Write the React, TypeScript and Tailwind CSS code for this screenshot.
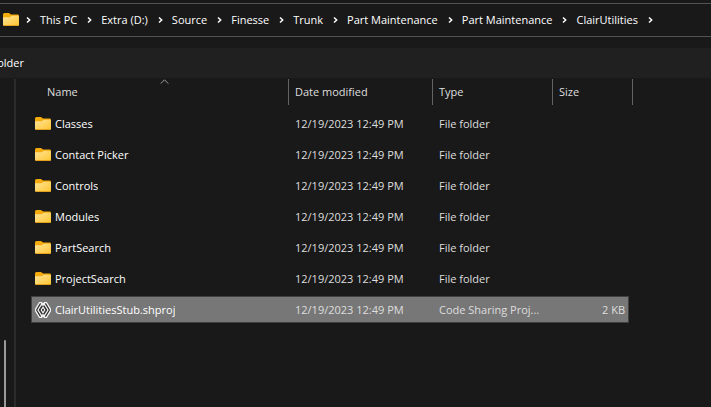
import React from "react";

const crumbs = [
  "This PC",
  "Extra (D:)",
  "Source",
  "Finesse",
  "Trunk",
  "Part Maintenance",
  "Part Maintenance",
  "ClairUtilities",
];

type Entry = { name: string; modified: string; type: string; size?: string; selected?: boolean };

const modified = "12/19/2023 12:49 PM";

const entries: Entry[] = [
  { name: "Classes", modified, type: "File folder" },
  { name: "Contact Picker", modified, type: "File folder" },
  { name: "Controls", modified, type: "File folder" },
  { name: "Modules", modified, type: "File folder" },
  { name: "PartSearch", modified, type: "File folder" },
  { name: "ProjectSearch", modified, type: "File folder" },
  { name: "ClairUtilitiesStub.shproj", modified, type: "Code Sharing Proj...", size: "2 KB", selected: true },
];

function FolderIcon() {
  return (
    <svg width="16" height="16" viewBox="0 0 16 16" className="shrink-0" aria-hidden="true">
      <defs>
        <linearGradient id="folderFront" x1="0" y1="0" x2="1" y2="1">
          <stop offset="0" stopColor="#ffe49a" />
          <stop offset="1" stopColor="#fec52f" />
        </linearGradient>
      </defs>
      <path d="M0 2.5Q0 1 1.5 1H5.5Q6.3 1 6.8 1.6L8 2.6H14.5Q16 2.6 16 4V8H0Z" fill="#f5ab0c" />
      <path d="M0 5.2H6.2Q7 5.2 7.5 4.7L8.2 4Q8.6 3.7 9.2 3.7H14.8Q16 3.7 16 4.9V12.5Q16 14 14.5 14H1.5Q0 14 0 12.5Z" fill="url(#folderFront)" />
      <path d="M0.3 13Q0.8 14 1.8 14H14.2Q15.3 14 15.8 13Z" fill="#e5a01c" />
    </svg>
  );
}

function SharedProjectIcon() {
  return (
    <svg width="16" height="16" viewBox="0 0 16 16" className="shrink-0" aria-hidden="true" strokeLinejoin="round">
      <path d="M4.2 0H6.8L8 1.2L9.2 0H11.8L16 6.8V9.2L11.8 16H9.2L8 14.8L6.8 16H4.2L0 9.2V6.8Z" fill="#f4f4f4" />
      <path d="M5.6 1.4L1.6 8L5.6 14.6M10.4 1.4L14.4 8L10.4 14.6" fill="none" stroke="#303030" strokeWidth="1.3" />
      <path d="M7.4 3.6L4.6 8L7.4 12.4M8.6 3.6L11.4 8L8.6 12.4" fill="none" stroke="#303030" strokeWidth="1.5" />
      <path d="M8 6.2L6.8 8L8 9.8L9.2 8Z" fill="#303030" />
    </svg>
  );
}

function Chevron() {
  return (
    <svg width="5" height="8" viewBox="0 0 5 8" className="shrink-0" aria-hidden="true">
      <path d="M1 1.5L3.7 4L1 6.5" fill="none" stroke="#ffffff" strokeWidth="1.5" />
    </svg>
  );
}

function AddressBar() {
  return (
    <nav aria-label="Address" className="mt-[3px] flex h-[34px] items-center border-y border-[#535353] pl-[3px]">
      <FolderIcon />
      <ol className="ml-[7px] flex items-center gap-[9px] whitespace-nowrap">
        <li className="flex">
          <Chevron />
        </li>
        {crumbs.map((crumb, i) => (
          <li key={i} className="flex items-center gap-[10px]">
            <a href="#" className="text-white">
              {crumb}
            </a>
            <Chevron />
          </li>
        ))}
      </ol>
    </nav>
  );
}

function FileTable() {
  const head = "h-[30px] p-0 align-top font-normal";
  const label = "flex h-[26px] items-center border-r border-[#636363] mt-px";
  return (
    <table className="w-[602px] table-fixed border-collapse text-left text-[#dedede]">
      <colgroup>
        <col className="w-[258px]" />
        <col className="w-[144px]" />
        <col className="w-[120px]" />
        <col className="w-[80px]" />
      </colgroup>
      <thead>
        <tr>
          <th className={head} aria-sort="ascending">
            <div className={`${label} relative pl-4`}>
              Name
              <svg width="9" height="5" viewBox="0 0 9 5" className="absolute top-0 left-[129px]" aria-hidden="true">
                <path d="M0.8 4.5L4.5 0.8L8.2 4.5" fill="none" stroke="#a0a0a0" />
              </svg>
            </div>
          </th>
          <th className={head}>
            <div className={`${label} pl-[6px]`}>Date modified</div>
          </th>
          <th className={head}>
            <div className={`${label} pl-[6px]`}>Type</div>
          </th>
          <th className={head}>
            <div className={`${label} pl-[6px]`}>Size</div>
          </th>
        </tr>
      </thead>
      <tbody>
        {entries.map((e) => {
          const cell = `flex h-[27px] items-center border-y ${
            e.selected ? "border-[#404040] bg-[#777777]" : "border-transparent"
          }`;
          return (
            <tr key={e.name} className="h-[31px]" aria-selected={!!e.selected}>
              <td className="p-0">
                <div className={`${cell} border-l pl-[3px] text-white`}>
                  {e.selected ? <SharedProjectIcon /> : <FolderIcon />}
                  <span className="ml-1 truncate">{e.name}</span>
                </div>
              </td>
              <td className="p-0">
                <div className={`${cell} pl-[6px] whitespace-nowrap`}>{e.modified}</div>
              </td>
              <td className="p-0">
                <div className={`${cell} pl-[6px] whitespace-nowrap`}>{e.type}</div>
              </td>
              <td className="p-0">
                <div className={`${cell} mr-1 justify-end border-r pr-[3px]`}>{e.size}</div>
              </td>
            </tr>
          );
        })}
      </tbody>
    </table>
  );
}

export default function App() {
  return (
    <div className="flex min-h-screen flex-col overflow-hidden bg-[#191919] font-['Open_Sans','Noto_Sans',sans-serif] text-[11px] leading-4 text-white">
      <AddressBar />
      <div className="mt-[11px] flex h-[30px] items-center bg-[#202020]">
        <button type="button" className="-ml-[37px] w-[61px] text-right whitespace-nowrap">
          New folder
        </button>
      </div>
      <div className="flex flex-1 items-stretch">
        <aside className="flex w-[14px] shrink-0 items-end pl-1">
          <div className="h-[67px] w-[2px] rounded-t-sm bg-[#9a9a9a]" />
        </aside>
        <div className="mt-px w-[2px] shrink-0 bg-[#2b2b2b]" />
        <main className="min-w-0 flex-1 pl-[15px]">
          <FileTable />
        </main>
      </div>
    </div>
  );
}
